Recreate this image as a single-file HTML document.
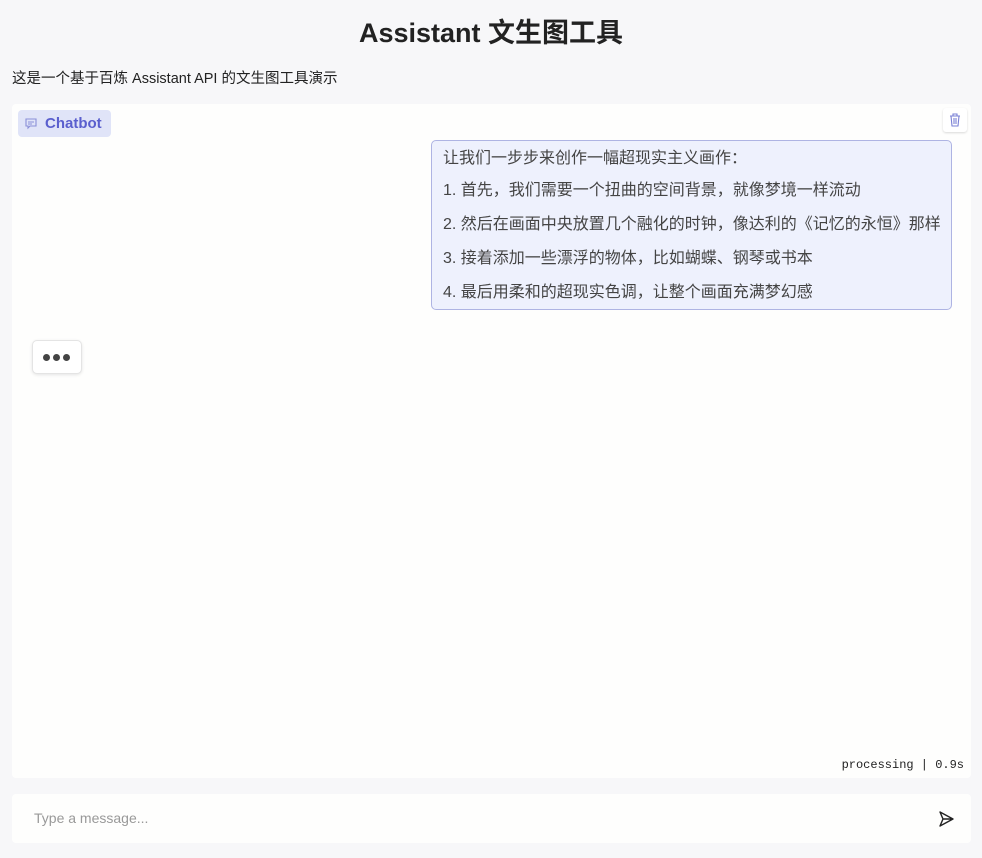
<!DOCTYPE html>
<html><head><meta charset="utf-8"><style>
body{margin:0;width:982px;height:858px;background:#f7f7f9;font-family:"Liberation Sans","Noto Sans CJK SC",sans-serif;color:#222;position:relative;overflow:hidden}
h1{position:absolute;top:11px;left:0;width:982px;text-align:center;margin:0;font-size:27px;font-weight:bold;color:#222}
.desc{position:absolute;top:67px;left:12px;font-size:14.5px}
.panel{position:absolute;left:12px;top:104px;width:959px;height:674px;background:#fefefd;border-radius:4px}
.label{position:absolute;left:6px;top:6px;width:93px;height:27px;background:#e0e4f8;border-radius:4px;color:#5a5fce;font-weight:bold;font-size:15px;line-height:27px}
.label span{position:absolute;left:27px}
.trash{position:absolute;left:931px;top:4px;width:24px;height:24px;background:#fff;border-radius:3px;box-shadow:0 1px 2px rgba(0,0,0,.15)}
.bubble{position:absolute;left:419px;top:36px;width:519px;height:168px;background:#eef1fd;border:1px solid #aeb4e3;border-radius:5px;font-size:16px;color:#444}
.bubble div{position:absolute;left:11px;white-space:nowrap}
.dots{position:absolute;left:20px;top:236px;width:48px;height:32px;background:#fff;border:1px solid #e4e4e4;border-radius:5px;box-shadow:0 1px 3px rgba(0,0,0,.1)}
.dots i{position:absolute;top:13px;width:7px;height:7px;border-radius:50%;background:#444}
.proc{position:absolute;right:7px;top:654px;font-family:"Liberation Mono",monospace;font-size:12px;color:#222}
.input{position:absolute;left:12px;top:794px;width:959px;height:49px;background:#fefefd;border-radius:4px}
.input span{position:absolute;left:22px;top:16px;font-size:14px;color:#999}
</style></head><body>
<h1>Assistant 文生图工具</h1>
<div class="desc">这是一个基于百炼 Assistant API 的文生图工具演示</div>
<div class="panel">
<div class="label"><svg style="position:absolute;left:7px;top:8px" width="12" height="12" viewBox="0 0 12 12" fill="none" stroke="#8a8fd8" stroke-width="1.1"><path d="M1 1h10v7H5l-2 2V8H1z"/><path d="M3 4h6M3 6h4"/></svg><span>Chatbot</span></div>
<div class="trash"><svg style="position:absolute;left:6px;top:5px" width="12" height="14" viewBox="0 0 12 14" fill="none" stroke="#7a80d6" stroke-width="1.1"><path d="M1 3h10M4 3V1h4v2M2 3l1 10h6l1-10M5 5v6M7 5v6"/></svg></div>
<div class="bubble">
<div style="top:3px">让我们一步步来创作一幅超现实主义画作：</div>
<div style="top:35px">1. 首先，我们需要一个扭曲的空间背景，就像梦境一样流动</div>
<div style="top:69px">2. 然后在画面中央放置几个融化的时钟，像达利的《记忆的永恒》那样</div>
<div style="top:103px">3. 接着添加一些漂浮的物体，比如蝴蝶、钢琴或书本</div>
<div style="top:137px">4. 最后用柔和的超现实色调，让整个画面充满梦幻感</div>
</div>
<div class="dots"><i style="left:10px"></i><i style="left:20px"></i><i style="left:30px"></i></div>
<div class="proc">processing | 0.9s</div>
</div>
<div class="input"><span>Type a message...</span>
<svg style="position:absolute;left:926px;top:17px" width="16" height="16" viewBox="0 0 16 16" fill="none" stroke="#222" stroke-width="1.4" stroke-linejoin="round"><path d="M2 1l13 7-13 7 3-7z M5 8h10"/></svg></div>
</body></html>
